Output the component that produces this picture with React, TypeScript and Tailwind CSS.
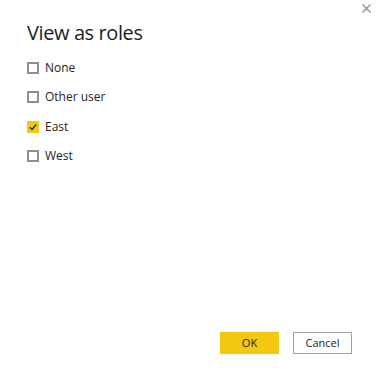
import React, { useState } from 'react';

const roles = ['None', 'Other user', 'East', 'West'];

const App: React.FC = () => {
  const [checked, setChecked] = useState<string[]>(['East']);

  const toggle = (role: string) => {
    setChecked((prev) => (prev.includes(role) ? prev.filter((r) => r !== role) : [...prev, role]));
  };

  return (
    <div
      className="w-[379px] h-[381px] bg-white flex flex-col text-[#201f1e]"
      style={{ fontFamily: '"Segoe UI", "Open Sans", sans-serif' }}
    >
      {/* Header */}
      <div className="flex justify-end pt-[4px] pr-[8px]">
        <button className="w-[9px] h-[9px] text-[#8a8a8a]">
          <svg viewBox="0 0 9 9" className="w-[9px] h-[9px]" fill="none" stroke="currentColor" strokeWidth={1.1}>
            <path d="M0.5 0.5l8 8M8.5 0.5l-8 8" />
          </svg>
        </button>
      </div>
      <h1 className="pl-[27px] mt-[6px] text-[20px] leading-[27px] font-medium tracking-[-0.4px]">View as roles</h1>

      {/* Roles */}
      <div className="flex flex-col pl-[27px] mt-[16px] gap-[18.5px]">
        {roles.map((role) => {
          const isOn = checked.includes(role);
          return (
            <label key={role} className="flex items-center gap-[6px] h-[11px] cursor-pointer" onClick={() => toggle(role)}>
              {isOn ? (
                <span className="w-[12px] h-[12px] bg-[#f2c811] flex items-center justify-center shrink-0">
                  <svg viewBox="0 0 12 12" className="w-[12px] h-[12px]" fill="none" stroke="#252423" strokeWidth={1.4}>
                    <path d="M2.8 6.2l2.2 2.2 4.3-5" />
                  </svg>
                </span>
              ) : (
                <span className="w-[12px] h-[12px] border-2 border-[#8f8f8f] bg-white shrink-0" />
              )}
              <span className="text-[12px] leading-[16px] text-[#252423]">{role}</span>
            </label>
          );
        })}
      </div>

      {/* Footer */}
      <div className="mt-auto flex justify-end gap-[14px] pr-[27px] pb-[27px]">
        <button className="w-[59px] h-[22px] bg-[#f2c811] text-[11px] text-[#252423]">OK</button>
        <button className="w-[59px] h-[22px] bg-white border border-[#a0a0a0] text-[11px] text-[#252423]">
          Cancel
        </button>
      </div>
    </div>
  );
};

export default App;
